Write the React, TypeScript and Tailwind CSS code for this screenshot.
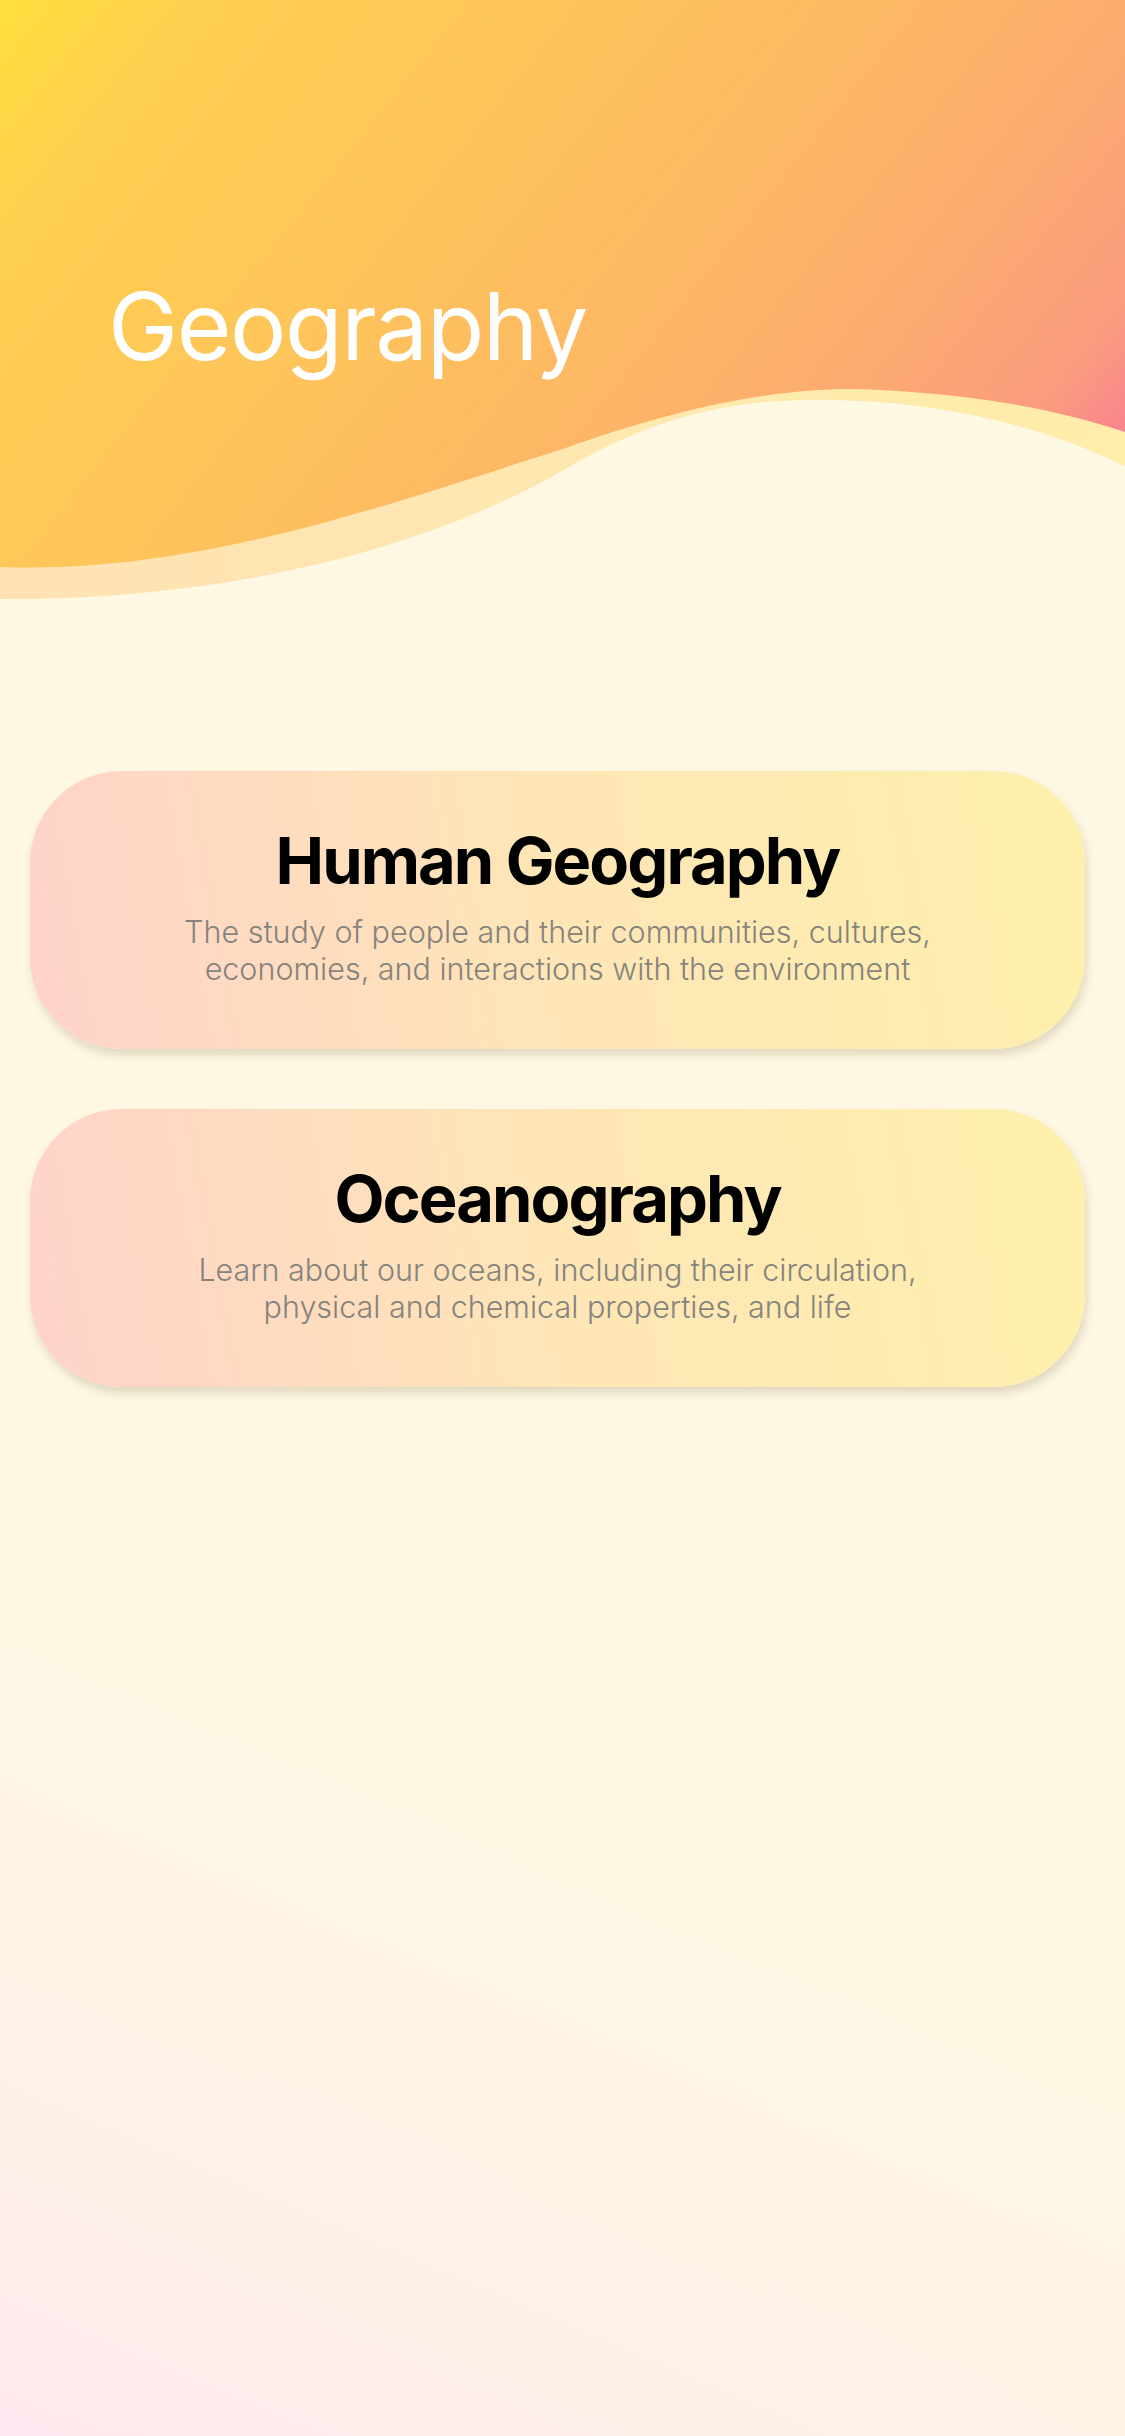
import React from "react";

const topics = [
  {
    title: "Human Geography",
    lines: ["The study of people and their communities, cultures,", "economies, and interactions with the environment"],
  },
  {
    title: "Oceanography",
    lines: ["Learn about our oceans, including their circulation,", "physical and chemical properties, and life"],
  },
];

function Waves() {
  return (
    <svg viewBox="0 0 1125 600" preserveAspectRatio="none" className="absolute inset-0 w-full h-full">
      <defs>
        <linearGradient id="sun" gradientUnits="userSpaceOnUse" x1="0" y1="0" x2="1125" y2="900">
          <stop offset="0" stopColor="#FFE03C" />
          <stop offset="0.1" stopColor="#FFD04F" />
          <stop offset="0.3" stopColor="#FEC55A" />
          <stop offset="0.48" stopColor="#FDB864" />
          <stop offset="0.6" stopColor="#FCAE6D" />
          <stop offset="0.74" stopColor="#FA9C7E" />
          <stop offset="0.82" stopColor="#F97A95" />
        </linearGradient>
        <linearGradient id="band" x1="0" y1="0" x2="1" y2="0">
          <stop offset="0" stopColor="#FFE2B4" />
          <stop offset="1" stopColor="#FFEDAA" />
        </linearGradient>
      </defs>
      {/* light band under the wave */}
      <path d="M0 0 H1125 V466 C1050 430 950 400 818 400 C760 400 680 405 581 460 C450 540 250 600 0 599 Z" fill="url(#band)" />
      {/* main wave */}
      <path d="M0 0 H1125 V432 C1060 410 980 395 880 390 C800 385 700 400 560 450 C400 500 200 575 0 567 Z" fill="url(#sun)" />
    </svg>
  );
}

function TopicCard({ title, lines }: { title: string; lines: string[] }) {
  return (
    <div className="ml-[30px] mr-[40px] h-[278px] rounded-[92px] pt-[51px] bg-[linear-gradient(80deg,#FFD2CA_0%,#FEE6B6_50%,#FEF0AC_100%)] shadow-[2px_6px_10px_rgba(120,100,60,0.22)] flex flex-col items-center">
      <h2 className="text-[65px] leading-[78px] font-bold tracking-[-0.03em] text-black">{title}</h2>
      <p className="mt-[13px] text-[30.5px] leading-[37px] font-light text-center text-[#86837d]">
        {lines[0]}
        <br />
        {lines[1]}
      </p>
    </div>
  );
}

export default function App() {
  return (
    <div
      className="min-h-[2436px] w-[1125px] overflow-hidden bg-[linear-gradient(23deg,#FFE8EE_0%,#FEF2E6_14%,#FEF7E4_28%,#FEF9E3_100%)]"
      style={{ fontFamily: "Inter, 'Noto Sans', sans-serif" }}
    >
      <header className="relative h-[600px]">
        <Waves />
        <h1 className="relative pt-[279px] pl-[108px] text-[94px] leading-[94px] font-normal text-white tracking-[-0.015em]">
          Geography
        </h1>
      </header>

      <main className="pt-[171px] flex flex-col gap-[60px]">
        {topics.map((t) => (
          <TopicCard key={t.title} title={t.title} lines={t.lines} />
        ))}
      </main>
    </div>
  );
}
